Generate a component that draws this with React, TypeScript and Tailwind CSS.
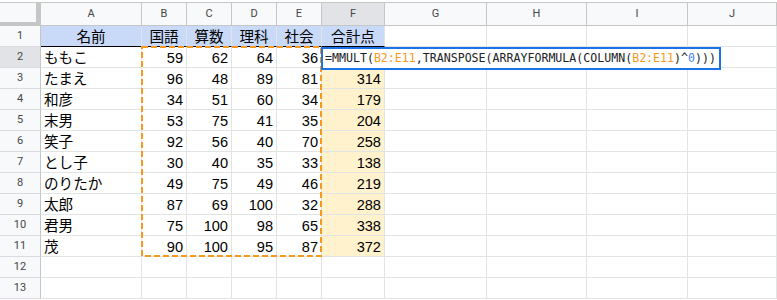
import React from "react";

const W = [
  "w-[41px]",
  "w-[101px]",
  "w-[45px]",
  "w-[45px]",
  "w-[45px]",
  "w-[45px]",
  "w-[63px]",
  "w-[102px]",
  "w-[100px]",
  "w-[101px]",
  "flex-1",
];

const COLS = ["A", "B", "C", "D", "E", "F", "G", "H", "I", "J"];

const DATA: (string | number)[][] = [
  ["ももこ", 59, 62, 64, 36, ""],
  ["たまえ", 96, 48, 89, 81, 314],
  ["和彦", 34, 51, 60, 34, 179],
  ["末男", 53, 75, 41, 35, 204],
  ["笑子", 92, 56, 40, 70, 258],
  ["とし子", 30, 40, 35, 33, 138],
  ["のりたか", 49, 75, 49, 46, 219],
  ["太郎", 87, 69, 100, 32, 288],
  ["君男", 75, 100, 98, 65, 338],
  ["茂", 90, 100, 95, 87, 372],
];

const HEAD = ["名前", "国語", "算数", "理科", "社会", "合計点"];

const cellFont =
  "font-['Liberation_Sans','Noto_Sans_CJK_JP',sans-serif] text-[14.6px] leading-[17px] text-[#000]";

function ColHeader() {
  return (
    <div className="flex h-[23px]">
      <div className="w-[41px] shrink-0 bg-[#f8f9fa] border-r-[5px] border-b-[4px] border-[#c4c7c5]" />
      {COLS.map((c, i) => (
        <div
          key={c}
          className={`${W[i + 1]} shrink-0 flex items-center justify-center border-r border-b border-[#c4c7c5] font-['Roboto',sans-serif] text-[11px] text-[#444746] ${
            i === 5 ? "bg-[#e1e3e6]" : "bg-[#f8f9fa]"
          }`}
        >
          {c}
        </div>
      ))}
    </div>
  );
}

function RowHead({ n }: { n: number }) {
  return (
    <div
      className={`w-[41px] shrink-0 flex items-center justify-center border-r border-b border-r-[#c4c7c5] border-b-[#dadce0] font-['Roboto',sans-serif] text-[11px] text-[#444746] ${
        n === 2 ? "bg-[#e1e3e6]" : "bg-[#f8f9fa]"
      }`}
    >
      {n}
    </div>
  );
}

function HeaderRow() {
  return (
    <div className="flex h-[21px]">
      <RowHead n={1} />
      {COLS.map((c, i) => {
        if (i < 6) {
          return (
            <div
              key={c}
              className={`${W[i + 1]} shrink-0 flex items-end justify-center bg-[#c9daf8] border-r border-b border-r-[#e2e3e3] border-b-[#000] ${cellFont}`}
            >
              {HEAD[i]}
            </div>
          );
        }
        return (
          <div
            key={c}
            className={`${W[i + 1]} shrink-0 border-r border-b border-[#e2e3e3]`}
          />
        );
      })}
    </div>
  );
}

function DataRow({ row, n }: { row: (string | number)[]; n: number }) {
  return (
    <div className="flex h-[21px]">
      <RowHead n={n} />
      {COLS.map((c, i) => {
        const v = i < 6 ? row[i] : "";
        const isNum = typeof v === "number";
        const bg = i === 5 && n > 2 ? "bg-[#fff2cc]" : "bg-white";
        return (
          <div
            key={c}
            className={`${W[i + 1]} shrink-0 flex items-end overflow-hidden whitespace-nowrap border-r border-b border-[#e2e3e3] ${bg} ${cellFont} ${
              isNum ? "justify-end pr-[3px]" : "justify-start pl-[3px]"
            }`}
          >
            {v}
          </div>
        );
      })}
    </div>
  );
}

function EmptyRow({ n }: { n: number }) {
  return (
    <div className="flex h-[21px]">
      <RowHead n={n} />
      {COLS.map((c, i) => (
        <div
          key={c}
          className={`${W[i + 1]} shrink-0 border-r border-b border-[#e2e3e3] bg-white`}
        />
      ))}
    </div>
  );
}

export default function App() {
  const R = "text-[#f6991f]";
  return (
    <div className="relative w-[777px] h-[300px] overflow-hidden bg-white">
      <div className="h-[2px] bg-white" />
      <div className="h-px bg-[#c7c7c7]" />
      <ColHeader />
      <HeaderRow />
      {DATA.map((r, i) => (
        <DataRow key={i} row={r} n={i + 2} />
      ))}
      <EmptyRow n={12} />
      <EmptyRow n={13} />

      {/* copy range dashed outline */}
      <svg
        className="absolute left-[140px] top-[45px] pointer-events-none"
        width="184"
        height="214"
      >
        <rect
          x="2"
          y="2"
          width="179"
          height="209"
          fill="none"
          stroke="#f6991f"
          strokeWidth="2"
          strokeDasharray="6 3"
        />
      </svg>

      {/* formula editor */}
      <div className="absolute left-[321px] top-[47px] w-[400px] h-[23px] border-2 border-[#1a73e8] bg-white flex items-center pl-[2px] whitespace-nowrap font-['DejaVu_Sans_Mono',monospace] text-[11.6px] text-[#202124]">
        <span>=MMULT(</span>
        <span className={R}>B2:E11</span>
        <span>,TRANSPOSE(ARRAYFORMULA(COLUMN(</span>
        <span className={R}>B2:E11</span>
        <span>)^</span>
        <span className="text-[#4285f4]">0</span>
        <span>)))</span>
      </div>
    </div>
  );
}
